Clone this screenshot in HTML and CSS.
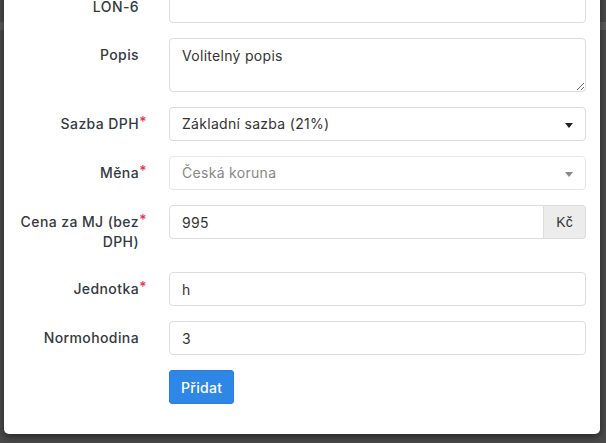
FILE: index.html
```html
<!DOCTYPE html>
<html lang="cs">
<head>
    <meta charset="UTF-8">
    <meta name="viewport" content="width=device-width, initial-scale=1.0">
    <title>Přidat položku</title>
    <link rel="stylesheet" href="styles.css">
</head>
<body>
    <div class="modal">
        <form class="form">
            <label class="label">LON-6</label>
            <div class="field">
                <input class="input" type="text">
            </div>

            <label class="label">Popis</label>
            <div class="field">
                <textarea class="input textarea">Volitelný popis</textarea>
            </div>

            <label class="label required">Sazba DPH</label>
            <div class="field">
                <div class="select">
                    <span>Základní sazba (21%)</span>
                    <b class="arrow"></b>
                </div>
            </div>

            <label class="label required">Měna</label>
            <div class="field">
                <div class="select disabled">
                    <span>Česká koruna</span>
                    <b class="arrow"></b>
                </div>
            </div>

            <label class="label required">Cena za MJ (bez DPH)</label>
            <div class="field">
                <div class="input-group">
                    <input class="input" type="text" value="995">
                    <span class="addon">Kč</span>
                </div>
            </div>

            <label class="label required">Jednotka</label>
            <div class="field">
                <input class="input" type="text" value="h">
            </div>

            <label class="label">Normohodina</label>
            <div class="field">
                <input class="input" type="text" value="3">
            </div>

            <div></div>
            <div class="field">
                <button class="btn" type="button">Přidat</button>
            </div>
        </form>
    </div>
</body>
</html>
```

FILE: styles.css
```css
:root {
    --text-color: #343a40;
    --border-color: #dcdcdc;
    --primary-color: #2e87e6;
    --danger-color: #ef2e55;
}
html, body {
    height: 100%;
}
body {
    margin: 0;
    font-family: Inter, "Noto Sans", sans-serif;
    color: var(--text-color);
    background: linear-gradient(to bottom, #4b4b4b 0 22px, #5c5c5c 22px 30px, #4b4b4b 30px);
    overflow: hidden;
}
.modal {
    margin: -11px 6px 0 4px;
    padding-bottom: 30px;
    background: #fff;
    border-radius: 0 0 5px 5px;
    box-shadow: 0 3px 9px rgba(0, 0, 0, 0.5);
}
.form {
    display: grid;
    grid-template-columns: 119px 1fr;
    column-gap: 30px;
    row-gap: 15px;
    padding: 0 14px 0 16px;
}
.label {
    position: relative;
    text-align: right;
    font-size: 14px;
    font-weight: 500;
    letter-spacing: 0.4px;
    line-height: 20px;
    padding: 7px 0 5px;
}
.label:first-child {
    padding-top: 8px;
}
.label.required::after {
    content: "*";
    position: absolute;
    right: -8px;
    top: 5px;
    color: var(--danger-color);
}
.field {
    min-width: 0;
}
.input {
    display: block;
    box-sizing: border-box;
    width: 100%;
    height: 34px;
    margin: 0;
    padding: 6px 12px;
    border: 1px solid var(--border-color);
    border-radius: 4px;
    font-family: inherit;
    font-size: 14px;
    letter-spacing: 0.3px;
    color: #333;
    background: #fff;
    outline: none;
}
.textarea {
    height: 54px;
    line-height: 20px;
    padding-top: 7px;
    resize: vertical;
}
.select {
    position: relative;
    box-sizing: border-box;
    height: 34px;
    padding: 6px 12px;
    border: 1px solid var(--border-color);
    border-radius: 4px;
    font-size: 14px;
    letter-spacing: 0.3px;
    line-height: 20px;
    color: #333;
}
.select.disabled {
    color: #888;
    border-color: #e6e6e6;
}
.arrow {
    position: absolute;
    right: 12px;
    top: 15px;
    border-style: solid;
    border-width: 5px 4px 0 4px;
    border-color: #222 transparent transparent;
}
.select.disabled .arrow {
    border-top-color: #888;
}
.input-group {
    display: flex;
}
.input-group .input {
    border-radius: 4px 0 0 4px;
}
.addon {
    flex: none;
    box-sizing: border-box;
    width: 42px;
    height: 34px;
    padding: 7px 0;
    text-align: center;
    border: 1px solid var(--border-color);
    border-left: 0;
    border-radius: 0 4px 4px 0;
    background: #ececec;
    font-family: "Liberation Sans", Arial, sans-serif;
    font-size: 14px;
    line-height: 18px;
    color: #333;
}
.btn {
    height: 34px;
    padding: 0 11px;
    border: 1px solid #2a7fd8;
    border-radius: 3px;
    background: var(--primary-color);
    color: #fff;
    font-family: inherit;
    font-size: 14px;
    font-weight: 500;
    letter-spacing: 0.3px;
}
```
